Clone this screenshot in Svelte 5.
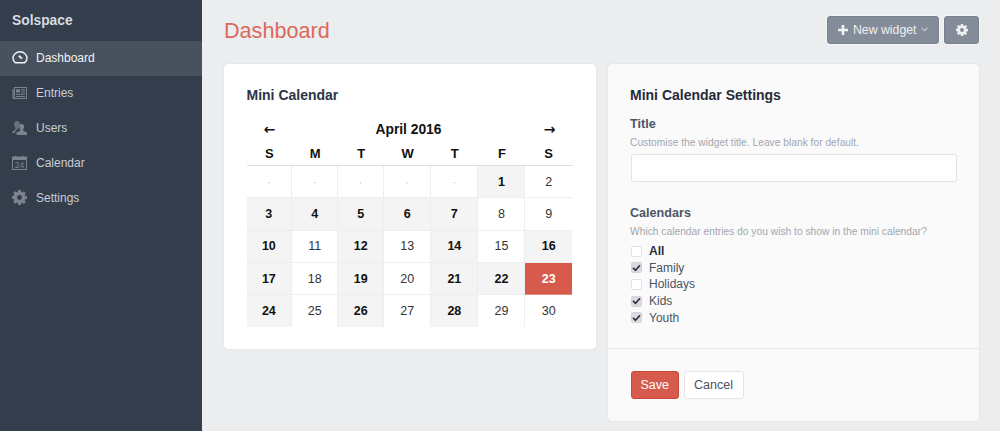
<script>
	const nav = [
		{ label: 'Dashboard', icon: 'dash', active: true },
		{ label: 'Entries', icon: 'entries' },
		{ label: 'Users', icon: 'users' },
		{ label: 'Calendar', icon: 'calendar' },
		{ label: 'Settings', icon: 'gear' }
	];

	const weekdays = ['S', 'M', 'T', 'W', 'T', 'F', 'S'];

	// n = day number, e = has entries, t = today
	const weeks = [
		[{}, {}, {}, {}, {}, { n: 1, e: 1 }, { n: 2 }],
		[{ n: 3, e: 1 }, { n: 4, e: 1 }, { n: 5, e: 1 }, { n: 6, e: 1 }, { n: 7, e: 1 }, { n: 8 }, { n: 9 }],
		[{ n: 10, e: 1 }, { n: 11 }, { n: 12, e: 1 }, { n: 13 }, { n: 14, e: 1 }, { n: 15 }, { n: 16, e: 1 }],
		[{ n: 17, e: 1 }, { n: 18 }, { n: 19, e: 1 }, { n: 20 }, { n: 21, e: 1 }, { n: 22, e: 1 }, { n: 23, t: 1 }],
		[{ n: 24, e: 1 }, { n: 25 }, { n: 26, e: 1 }, { n: 27 }, { n: 28, e: 1 }, { n: 29 }, { n: 30 }]
	];

	const calendars = [
		{ label: 'All', checked: false, bold: true },
		{ label: 'Family', checked: true },
		{ label: 'Holidays', checked: false },
		{ label: 'Kids', checked: true },
		{ label: 'Youth', checked: true }
	];

	const gear = 'M6.6 0h2.8l.4 2.1c.4.1.8.3 1.1.5l1.8-1.2 2 2-1.2 1.8c.2.3.4.7.5 1.1l2.1.4v2.8l-2.1.4c-.1.4-.3.8-.5 1.1l1.2 1.8-2 2-1.8-1.2c-.3.2-.7.4-1.1.5L9.4 16H6.6l-.4-2.1c-.4-.1-.8-.3-1.1-.5l-1.8 1.2-2-2 1.2-1.8c-.2-.3-.4-.7-.5-1.1L-.1 9.3V6.5l2.1-.4c.1-.4.3-.8.5-1.1L1.3 3.2l2-2 1.8 1.2c.3-.2.7-.4 1.1-.5L6.6 0zM8 5.4a2.6 2.6 0 1 0 0 5.2 2.6 2.6 0 0 0 0-5.200z';
</script>

{#snippet gearIcon(size)}
	<svg width={size} height={size} viewBox="0 0 16 16"><path fill="currentColor" fill-rule="evenodd" d={gear} /></svg>
{/snippet}

<div class="shell">
	<aside class="sidebar">
		<div class="brand">Solspace</div>
		<nav>
			{#each nav as item}
				<div class="nav-item" class:active={item.active}>
					<span class="nav-icon">
						{#if item.icon === 'dash'}
							<svg width="16" height="13" viewBox="0 0 16 13" fill="none">
								<path d="M3.300 11.800h9.400c1.300-1.200 2.300-2.800 2.300-4.600a7 6.400 0 0 0-14 0c0 1.800 1 3.400 2.300 4.600z" stroke="currentColor" stroke-width="1.400" />
								<path d="M6.800 4.800l3.200 2.800" stroke="currentColor" stroke-width="1.800" />
							</svg>
						{:else if item.icon === 'entries'}
							<svg width="15" height="12" viewBox="0 0 15 12">
								<path fill="currentColor" opacity=".6" d="M0 2h2v10H1a1 1 0 0 1-1-1z" />
								<rect x="2.500" y=".500" width="12" height="11" fill="none" stroke="currentColor" />
								<path fill="currentColor" d="M4 2.200h4v3.300H4zM9 2.200h4v1H9zM9 4.500h4v1H9zM4 6.800h9v1H4zM4 9h9v1H4z" />
							</svg>
						{:else if item.icon === 'users'}
							<svg width="15" height="14" viewBox="0 0 15 14">
								<path fill="currentColor" opacity=".75" d="M5 0c2 0 3 1.300 2.800 3.200-.1 1.200-.6 2.200-1.300 2.800l.2 1.200L4 9.500 3 12H0V10.500l3.200-2 .3-1.500C2.800 6.200 2.300 5 2.200 3.500 2 1.400 3.200 0 5 0z" />
								<path fill="currentColor" d="M9.500 3c1.800 0 2.800 1.300 2.600 3-.1 1.100-.5 2-1.100 2.500l.2 1.300 3.800 1.700V14H4.500v-2.500l3.700-1.700.2-1.300C7.700 8 7.300 7.100 7.100 6 6.900 4.300 7.800 3 9.500 3z" />
							</svg>
						{:else if item.icon === 'calendar'}
							<svg width="15" height="14" viewBox="0 0 15 14">
								<path fill="currentColor" d="M.5 1h14v3H.5zM3 0h1.500v1H3zM10.500 0H12v1h-1.500z" />
								<rect x=".500" y="1" width="14" height="12.500" fill="none" stroke="currentColor" />
								<text x="7.500" y="12" text-anchor="middle" font-size="8.500" font-family="'Liberation Sans', sans-serif" fill="currentColor">24</text>
							</svg>
						{:else}
							{@render gearIcon(15)}
						{/if}
					</span>
					<span>{item.label}</span>
				</div>
			{/each}
		</nav>
	</aside>

	<main>
		<header>
			<h1>Dashboard</h1>
			<div class="actions">
				<button class="btn-grey btn-new">
					<svg class="plus" width="10" height="10" viewBox="0 0 10 10"><path fill="currentColor" d="M3.700 0h2.600v3.700H10v2.600H6.300V10H3.700V6.300H0V3.700h3.700z" /></svg>
					New widget
					<svg width="7" height="5" viewBox="0 0 7 5" fill="none"><path d="M.5.800L3.500 3.800l3-3" stroke="currentColor" stroke-width="1" /></svg>
				</button>
				<button class="btn-grey btn-gear">{@render gearIcon(12)}</button>
			</div>
		</header>

		<div class="columns">
			<section class="card calendar-card">
				<h2>Mini Calendar</h2>
				<div class="cal-head">
					<span class="arrow">←</span>
					<span class="month">April 2016</span>
					<span class="arrow">→</span>
				</div>
				<div class="cols weekdays">
					{#each weekdays as d}<span>{d}</span>{/each}
				</div>
				<div class="cols days">
					{#each weeks as week}
						{#each week as day}
							<div class="day" class:busy={day.e} class:today={day.t} class:empty={!day.n}>{day.n ?? '·'}</div>
						{/each}
					{/each}
				</div>
			</section>

			<section class="card settings-card">
				<div class="settings-body">
					<h2 class="dark">Mini Calendar Settings</h2>
					<div class="field-label">Title</div>
					<div class="hint">Customise the widget title. Leave blank for default.</div>
					<input type="text" />
					<div class="field-label second">Calendars</div>
					<div class="hint">Which calendar entries do you wish to show in the mini calendar?</div>
					<div class="checks">
						{#each calendars as c}
							<div class="check-row" class:bold={c.bold}>
								<span class="box" class:on={c.checked}>
									{#if c.checked}
										<svg width="10" height="8" viewBox="0 0 11 9" fill="none"><path d="M1.200 4.200l3 3 5.600-6" stroke="#29303d" stroke-width="2" /></svg>
									{/if}
								</span>
								{c.label}
							</div>
						{/each}
					</div>
				</div>
				<div class="settings-foot">
					<button class="btn-save">Save</button>
					<button class="btn-cancel">Cancel</button>
				</div>
			</section>
		</div>
	</main>
</div>

<style>
	:global(body) {
		background: #ebedef;
		font-family: "Liberation Sans", Arial, sans-serif;
	}

	.shell {
		display: flex;
		height: 431px;
		overflow: hidden;
	}

	.sidebar {
		width: 202px;
		flex: none;
		background: #333d4b;
		font-size: 12px;
	}

	.brand {
		height: 41px;
		line-height: 41px;
		padding-left: 12px;
		font-size: 13.800px;
		font-weight: 700;
		color: #d7dbe0;
	}

	.nav-item {
		display: flex;
		align-items: center;
		height: 35px;
		box-sizing: border-box;
		padding: 0 0 2px 12px;
		color: #c9ced5;
	}

	.nav-item.active {
		background: #48525f;
		color: #f2f3f5;
	}

	.nav-icon {
		width: 24px;
		display: flex;
		align-items: center;
		color: #7c838e;
	}

	.active .nav-icon {
		color: #f2f3f5;
	}

	main {
		flex: 1;
		min-width: 0;
		padding: 0 21px 0 22px;
	}

	header {
		display: flex;
		justify-content: space-between;
		align-items: center;
		height: 64px;
		padding-bottom: 5px;
		box-sizing: border-box;
	}

	h1 {
		margin: 3px 0 0;
		font-size: 21.600px;
		font-weight: 400;
		color: #dc6a5b;
	}

	.actions {
		display: flex;
		gap: 5px;
	}

	button {
		font-family: inherit;
		font-size: 12.500px;
		box-sizing: border-box;
		cursor: pointer;
	}

	.btn-grey {
		display: flex;
		align-items: center;
		gap: 4px;
		height: 28px;
		background: #848c9a;
		border: 1px solid #79818f;
		border-radius: 3px;
		color: #eef0f2;
		box-shadow: 0 0 0 1px rgba(255, 255, 255, 0.45);
	}

	.btn-new {
		font-size: 12.300px;
		padding: 0 10.500px 0 9.500px;
	}

	.plus {
		margin-right: 1px;
	}

	.btn-gear {
		width: 35px;
		justify-content: center;
		padding: 0;
	}

	.columns {
		display: flex;
		gap: 12px;
		align-items: flex-start;
	}

	.card {
		border-radius: 4px;
		box-shadow: 0 0 1px rgba(60, 70, 85, 0.3);
	}

	.calendar-card {
		width: 372px;
		height: 285px;
		box-sizing: border-box;
		background: #fff;
		padding: 23px 23.500px 0 22.500px;
		flex: none;
	}

	h2 {
		margin: 0;
		font-size: 14px;
		line-height: 17px;
		font-weight: 700;
		color: #2b3444;
	}

	h2.dark {
		color: #252c38;
	}

	.cal-head {
		display: grid;
		grid-template-columns: 46px 1fr 46px;
		text-align: center;
		color: #111;
		margin-top: 15px;
		height: 25px;
		line-height: 20px;
		font-size: 13.800px;
		font-weight: 700;
	}

	.month {
		padding: 1px 2px 0 0;
	}

	.arrow {
		font-size: 14px;
		font-family: "DejaVu Sans", sans-serif;
	}

	/* auto table layout in the original leaves the columns slightly unequal */
	.cols {
		display: grid;
		grid-template-columns: 45.700px 46px 46px 47px 47.300px 47px 46.400px;
		width: 326px;
	}

	.weekdays {
		text-align: center;
		font-size: 13px;
		font-weight: 700;
		color: #111;
		height: 21px;
		line-height: 19px;
		border-bottom: 1px solid #dcdee0;
	}

	.days {
		grid-auto-rows: 32.300px;
	}

	.day {
		display: flex;
		align-items: center;
		justify-content: center;
		box-sizing: border-box;
		font-size: 12.500px;
		color: #333;
		border-right: 1px solid #eeeeef;
		border-bottom: 1px solid #eeeeef;
	}

	.day:nth-child(7n) {
		border-right: none;
	}

	.day:nth-last-child(-n + 7) {
		border-bottom: none;
	}

	.day.busy {
		background: #f4f4f5;
		font-weight: 700;
		color: #111;
	}

	.day.today {
		background: #d65b4c;
		color: #fff;
		font-weight: 700;
		border-color: #e08a80;
	}

	.day.empty {
		color: #b9bdc2;
		font-size: 11px;
	}

	.settings-card {
		width: 371px;
		height: 357px;
		flex: none;
		background: #fafafa;
		display: flex;
		flex-direction: column;
	}

	.settings-body {
		flex: 1;
		padding: 23px 22px 0;
		border-bottom: 1px solid #e3e4e6;
	}

	.field-label {
		margin-top: 12px;
		font-size: 12.600px;
		line-height: 16px;
		font-weight: 700;
		color: #4b5767;
	}

	.field-label.second {
		margin-top: 23px;
	}

	.hint {
		font-size: 10.260px;
		line-height: 14px;
		margin-top: 4px;
		color: #a3a7ae;
	}

	input {
		display: block;
		width: 326px;
		height: 28px;
		box-sizing: border-box;
		margin: 4px 0 0 .500px;
		border: 1px solid #e3e4e6;
		border-radius: 3px;
		background: #fff;
	}

	.checks {
		margin-top: 4px;
	}

	.check-row {
		display: flex;
		align-items: center;
		gap: 7px;
		height: 16.600px;
		font-size: 12px;
		color: #4a5361;
	}

	.check-row.bold {
		font-weight: 700;
		color: #29303d;
	}

	.box {
		width: 11px;
		height: 11px;
		box-sizing: border-box;
		margin-left: 1px;
		border: 1px solid #e1e2e4;
		border-radius: 2px;
		background: #fff;
		display: flex;
		align-items: center;
		justify-content: center;
	}

	.box.on {
		background: #d9dbe0;
		border-color: #d3d5da;
	}

	.settings-foot {
		height: 72px;
		box-sizing: border-box;
		padding: 22px 22px 0 23px;
		display: flex;
		gap: 5px;
		align-items: flex-start;
	}

	.btn-save {
		width: 47.500px;
		height: 28px;
		background: #d65b4c;
		border: 1px solid #c44b3d;
		border-radius: 3px;
		color: #fff;
	}

	.btn-cancel {
		width: 60px;
		height: 28px;
		background: #fff;
		border: 1px solid #e3e4e6;
		border-radius: 3px;
		color: #4a5361;
	}
</style>
